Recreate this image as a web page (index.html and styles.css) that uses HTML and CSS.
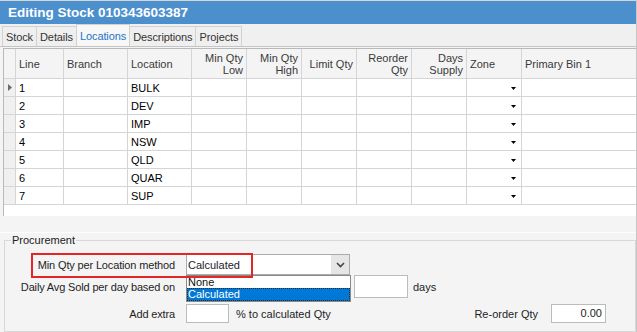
FILE: index.html
```html
<!DOCTYPE html>
<html>
<head>
<meta charset="utf-8">
<link rel="stylesheet" href="styles.css">
</head>
<body>
<div class="window">
  <div class="titlebar">Editing Stock 010343603387</div>
  <div class="tabs">
    <div class="tab">Stock</div>
    <div class="tab">Details</div>
    <div class="tab active">Locations</div>
    <div class="tab">Descriptions</div>
    <div class="tab">Projects</div>
  </div>
  <div class="page">
    <div class="grid">
      <div class="row head">
        <div class="cell ind"></div>
        <div class="cell">Line</div>
        <div class="cell">Branch</div>
        <div class="cell">Location</div>
        <div class="cell num">Min Qty<br>Low</div>
        <div class="cell num">Min Qty<br>High</div>
        <div class="cell num">Limit Qty</div>
        <div class="cell num">Reorder<br>Qty</div>
        <div class="cell num">Days<br>Supply</div>
        <div class="cell">Zone</div>
        <div class="cell last">Primary Bin 1</div>
      </div>
      <div class="row">
        <div class="cell ind"><svg class="pointer" width="4" height="7" viewBox="0 0 4 7"><polygon points="0,0 4,3.5 0,7" /></svg></div>
        <div class="cell">1</div><div class="cell"></div><div class="cell">BULK</div>
        <div class="cell"></div><div class="cell"></div><div class="cell"></div><div class="cell"></div><div class="cell"></div>
        <div class="cell zone"><svg width="5" height="3" viewBox="0 0 5 3"><polygon points="0,0 5,0 2.5,3" /></svg></div>
        <div class="cell last"></div>
      </div>
      <div class="row">
        <div class="cell ind"></div>
        <div class="cell">2</div><div class="cell"></div><div class="cell">DEV</div>
        <div class="cell"></div><div class="cell"></div><div class="cell"></div><div class="cell"></div><div class="cell"></div>
        <div class="cell zone"><svg width="5" height="3" viewBox="0 0 5 3"><polygon points="0,0 5,0 2.5,3" /></svg></div>
        <div class="cell last"></div>
      </div>
      <div class="row">
        <div class="cell ind"></div>
        <div class="cell">3</div><div class="cell"></div><div class="cell">IMP</div>
        <div class="cell"></div><div class="cell"></div><div class="cell"></div><div class="cell"></div><div class="cell"></div>
        <div class="cell zone"><svg width="5" height="3" viewBox="0 0 5 3"><polygon points="0,0 5,0 2.5,3" /></svg></div>
        <div class="cell last"></div>
      </div>
      <div class="row">
        <div class="cell ind"></div>
        <div class="cell">4</div><div class="cell"></div><div class="cell">NSW</div>
        <div class="cell"></div><div class="cell"></div><div class="cell"></div><div class="cell"></div><div class="cell"></div>
        <div class="cell zone"><svg width="5" height="3" viewBox="0 0 5 3"><polygon points="0,0 5,0 2.5,3" /></svg></div>
        <div class="cell last"></div>
      </div>
      <div class="row">
        <div class="cell ind"></div>
        <div class="cell">5</div><div class="cell"></div><div class="cell">QLD</div>
        <div class="cell"></div><div class="cell"></div><div class="cell"></div><div class="cell"></div><div class="cell"></div>
        <div class="cell zone"><svg width="5" height="3" viewBox="0 0 5 3"><polygon points="0,0 5,0 2.5,3" /></svg></div>
        <div class="cell last"></div>
      </div>
      <div class="row">
        <div class="cell ind"></div>
        <div class="cell">6</div><div class="cell"></div><div class="cell">QUAR</div>
        <div class="cell"></div><div class="cell"></div><div class="cell"></div><div class="cell"></div><div class="cell"></div>
        <div class="cell zone"><svg width="5" height="3" viewBox="0 0 5 3"><polygon points="0,0 5,0 2.5,3" /></svg></div>
        <div class="cell last"></div>
      </div>
      <div class="row">
        <div class="cell ind"></div>
        <div class="cell">7</div><div class="cell"></div><div class="cell">SUP</div>
        <div class="cell"></div><div class="cell"></div><div class="cell"></div><div class="cell"></div><div class="cell"></div>
        <div class="cell zone"><svg width="5" height="3" viewBox="0 0 5 3"><polygon points="0,0 5,0 2.5,3" /></svg></div>
        <div class="cell last"></div>
      </div>
    </div>
    <div class="bottom">
      <div class="sep"></div>
      <div class="group">
        <span class="legend">Procurement</span>
        <div class="highlight"></div>
        <div class="frow r1">
          <span class="label">Min Qty per Location method</span>
          <div class="combo">
            <span class="combo-text">Calculated</span>
            <span class="combo-btn"><svg width="9" height="6" viewBox="0 0 9 6"><polyline points="1,1 4.5,4.5 8,1" /></svg></span>
            <div class="droplist">
              <div class="item">None</div>
              <div class="item selected">Calculated</div>
            </div>
          </div>
        </div>
        <div class="frow r2">
          <span class="label">Daily Avg Sold per day based on</span>
          <span class="spacer"></span>
          <span class="input days-input"></span>
          <span class="after">days</span>
        </div>
        <div class="frow r3">
          <span class="label">Add extra</span>
          <span class="input extra-input"></span>
          <span class="after wide">% to calculated Qty</span>
          <div class="reorder">
            <span>Re-order Qty</span>
            <span class="input qty-input">0.00</span>
          </div>
        </div>
      </div>
    </div>
  </div>
</div>
</body>
</html>
```

FILE: styles.css
```css
* { box-sizing: border-box; }
html, body { margin: 0; padding: 0; }
body {
  width: 637px;
  height: 332px;
  overflow: hidden;
  font-family: "Liberation Sans", Arial, sans-serif;
  font-size: 11px;
  color: #000;
  background: #f4f4f4;
}
.window {
  width: 637px;
  height: 332px;
  border-right: 1px solid #c6c6c6;
  display: flex;
  flex-direction: column;
}
.titlebar {
  height: 24px;
  flex: none;
  border-top: 1px solid #d6d6d6;
  background: #4b8fcd;
  color: #fff;
  font-weight: bold;
  font-size: 13.5px;
  padding-left: 8px;
  display: flex;
  align-items: center;
}
.tabs {
  height: 22px;
  flex: none;
  background: #f0f0f0;
  display: flex;
  align-items: flex-end;
  padding-left: 3px;
}
.tab {
  height: 20px;
  border: 1px solid #d2d2d2;
  border-bottom: none;
  margin-left: -1px;
  padding: 1px 3px 0;
  display: flex;
  align-items: center;
  color: #333;
  background: #efefef;
  letter-spacing: -0.1px;
}
.tab.active {
  height: 22px;
  padding-top: 0;
  background: #f7f7f7;
  color: #1e74c9;
}
.page {
  flex: 1;
  border-top: 1px solid #c4c4c4;
  padding-top: 1px;
  display: flex;
  flex-direction: column;
}
.grid {
  margin-left: 3px;
  height: 168px;
  flex: none;
  border-top: 1px solid #b9b9b9;
  border-left: 1px solid #b9b9b9;
  background: #fff;
}
.row {
  display: grid;
  grid-template-columns: 12px 48px 64px 64px repeat(6, 55px) 114px;
  height: 18px;
}
.row.head {
  height: 30px;
  background: #f4f4f4;
  color: #3a3a3a;
  line-height: 12px;
}
.cell {
  border-right: 1px solid #d5d5d5;
  border-bottom: 1px solid #d5d5d5;
  padding: 0 2px 0 3px;
  display: flex;
  align-items: center;
  white-space: nowrap;
  overflow: hidden;
}
.row .cell.last { border-right: none; }
.cell.num {
  justify-content: flex-end;
  text-align: right;
  padding-right: 3px;
}
.cell.ind {
  background: #f0f0f0;
  padding: 0 0 0 4px;
}
.head .cell.ind { background: #f4f4f4; }
.pointer { fill: #6b6b6b; }
.cell.zone {
  justify-content: flex-end;
  padding-right: 5px;
  padding-top: 1px;
}
.cell.zone svg { fill: #000; }
.bottom {
  flex: 1;
  padding: 16px 0 0 4px;
  display: flex;
  flex-direction: column;
}
.sep {
  height: 1px;
  background: #fdfdfd;
  margin-left: -4px;
}
.group {
  position: relative;
  margin-top: 7px;
  height: 92px;
  border: 1px solid #d8d8d8;
  padding: 13px 29px 0 0;
  display: flex;
  flex-direction: column;
  color: #1e1e1e;
}
.legend {
  position: absolute;
  top: -7px;
  left: 6px;
  padding: 0 1px;
  line-height: 13px;
  background: #f4f4f4;
  color: #222;
}
.highlight {
  position: absolute;
  left: 26px;
  top: 12px;
  width: 222px;
  height: 25px;
  border: 2px solid #e52626;
  pointer-events: none;
  z-index: 5;
}
.frow {
  display: flex;
  align-items: center;
}
.r1 { height: 21px; }
.r2 { height: 23px; }
.r3 { height: 19px; margin-top: 6px; }
.label {
  flex: none;
  width: 170px;
  margin-right: 11px;
  text-align: right;
  letter-spacing: -0.15px;
}
.combo {
  position: relative;
  flex: none;
  width: 164px;
  height: 21px;
  border: 1px solid #acacac;
  background: #fff;
  display: flex;
  z-index: 2;
}
.combo-text {
  flex: 1;
  padding-left: 1px;
  display: flex;
  align-items: center;
  color: #1c1c2c;
}
.combo-btn {
  width: 18px;
  background: #e6e6e6;
  display: flex;
  align-items: center;
  justify-content: center;
}
.combo-btn svg {
  fill: none;
  stroke: #444;
  stroke-width: 1.6;
}
.droplist {
  position: absolute;
  top: 20px;
  left: -1px;
  width: 165px;
  height: 27px;
  border: 1px solid #8a8a8a;
  background: #fff;
  padding: 0;
}
.item {
  height: 12px;
  line-height: 12px;
  padding-left: 1px;
  color: #111;
}
.item.selected {
  height: 13px;
  background: #0078d7;
  color: #fff;
  border: 1px dotted #2a2a2a;
  padding-left: 0;
  line-height: 11px;
}
.spacer {
  flex: none;
  width: 164px;
  margin-right: 4px;
}
.input {
  flex: none;
  background: #fff;
  border: 1px solid #bcbcbc;
}
.days-input { width: 54px; height: 23px; }
.after { margin-left: 5px; }
.after.wide { margin-left: 7px; }
.extra-input { width: 43px; height: 19px; }
.reorder {
  margin-left: auto;
  display: flex;
  align-items: center;
}
.qty-input {
  width: 55px;
  height: 19px;
  margin-left: 13px;
  text-align: right;
  padding-right: 3px;
  line-height: 17px;
}
```
